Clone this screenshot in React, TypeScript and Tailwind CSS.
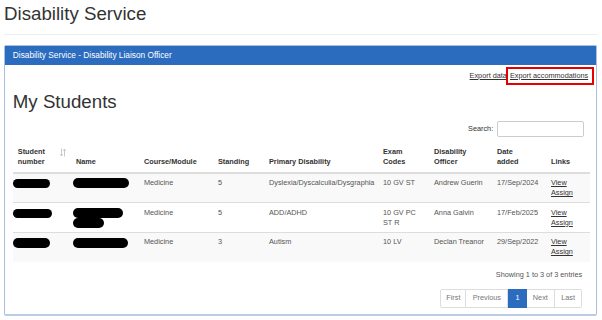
import React from "react";

type Row = {
  sn: number;
  name: [number, number][];
  course: string;
  standing: string;
  disability: string;
  exam: string;
  officer: string;
  date: string;
};

const rows: Row[] = [
  {
    sn: 37,
    name: [[56, 10]],
    course: "Medicine",
    standing: "5",
    disability: "Dyslexia/Dyscalculia/Dysgraphia",
    exam: "10 GV ST",
    officer: "Andrew Guerin",
    date: "17/Sep/2024",
  },
  {
    sn: 39,
    name: [
      [50, 9.5],
      [31, 9.5],
    ],
    course: "Medicine",
    standing: "5",
    disability: "ADD/ADHD",
    exam: "10 GV PC ST R",
    officer: "Anna Galvin",
    date: "17/Feb/2025",
  },
  {
    sn: 37,
    name: [[55, 10]],
    course: "Medicine",
    standing: "3",
    disability: "Autism",
    exam: "10 LV",
    officer: "Declan Treanor",
    date: "29/Sep/2022",
  },
];

function SortIcon() {
  return (
    <svg width="6" height="9" viewBox="0 0 6 9" className="absolute right-[6px] top-[5px]">
      <path d="M1.5 0.5v7.5M0.3 6.3l1.2 1.7 1.2-1.7" stroke="#bdbdbd" strokeWidth="0.8" fill="none" />
      <path d="M4.5 8.5V1M3.3 2.7l1.2-1.7 1.2 1.7" stroke="#bdbdbd" strokeWidth="0.8" fill="none" />
    </svg>
  );
}

const th = "px-[4.2px] py-[4.2px] text-left align-bottom font-bold text-[#333] border-b-2 border-[#ddd]";
const td = "px-[4.2px] py-[4.1px] leading-[10.2px] align-top border-t border-[#ddd]";

export default function App() {
  return (
    <div className="w-[602px] h-[320px] overflow-hidden bg-white font-['Liberation_Sans',Arial,sans-serif] text-[7.3px] leading-[10.4px] text-[#555]">
      <div className="pl-[4px] pr-[5px]">
        <div className="pt-[2.5px] pb-[10px] border-b border-[#eee] mb-[10px]">
          <h1 className="text-[18.7px] leading-[21px] text-[#333]">Disability Service</h1>
        </div>

        <div className="border border-[#a9bfdf] border-b-2 border-b-[#b9cbe5] rounded-[2px]">
          <div className="bg-[#2b6cbf] text-white text-[8.3px] leading-[9.2px] px-[7.8px] py-[5.2px]">
            Disability Service - Disability Liaison Officer
          </div>

          <div className="px-[7.8px] pt-[5.5px] pb-[6px]">
            <div className="flex justify-end gap-[3px] text-[#333]">
              <a className="underline">Export data</a>
              <span className="relative">
                <a className="underline">Export accommodations</a>
                <span className="absolute left-[-4px] right-[-6px] top-[-4px] bottom-[-4px] border-[2.5px] border-[#e60000]" />
              </span>
            </div>

            <h1 className="mt-[10.4px] text-[18.7px] leading-[21px] text-[#333]">My Students</h1>

            <div className="mt-[8.7px] flex items-center justify-end gap-[4px] pr-[4px] text-[#333]">
              <span>Search:</span>
              <div className="w-[87px] h-[16px] border border-[#ccc] rounded-[2px] bg-white" />
            </div>

            <table className="mt-[5.6px] w-[577px] table-fixed border-collapse">
              <colgroup>
                <col className="w-[59px]" />
                <col className="w-[68px]" />
                <col className="w-[74px]" />
                <col className="w-[51px]" />
                <col className="w-[114px]" />
                <col className="w-[51px]" />
                <col className="w-[63px]" />
                <col className="w-[54px]" />
                <col className="w-[43px]" />
              </colgroup>
              <thead>
                <tr>
                  <th className={th + " relative pl-[5px]"}>
                    Student
                    <br />
                    number
                    <SortIcon />
                  </th>
                  <th className={th}>Name</th>
                  <th className={th}>Course/Module</th>
                  <th className={th}>Standing</th>
                  <th className={th}>Primary Disability</th>
                  <th className={th}>
                    Exam
                    <br />
                    Codes
                  </th>
                  <th className={th}>
                    Disability
                    <br />
                    Officer
                  </th>
                  <th className={th}>
                    Date
                    <br />
                    added
                  </th>
                  <th className={th}>Links</th>
                </tr>
              </thead>
              <tbody>
                {rows.map((r, i) => (
                  <tr key={i} className={i % 2 === 0 ? "bg-[#f9f9f9]" : "bg-white"}>
                    <td className={td + " pl-0"}>
                      <div className="mt-[1px] h-[9.5px] rounded-full bg-black" style={{ width: r.sn }} />
                    </td>
                    <td className={td + " pl-[1.5px]"}>
                      {r.name.map(([w, h], j) => (
                        <div
                          key={j}
                          className="rounded-full bg-black mt-[0.5px]"
                          style={{ width: w, height: h }}
                        />
                      ))}
                    </td>
                    <td className={td}>{r.course}</td>
                    <td className={td}>{r.standing}</td>
                    <td className={td + " whitespace-nowrap"}>{r.disability}</td>
                    <td className={td}>{r.exam}</td>
                    <td className={td}>{r.officer}</td>
                    <td className={td}>{r.date}</td>
                    <td className={td + " text-[#333]"}>
                      <a className="block underline">View</a>
                      <a className="block underline">Assign</a>
                    </td>
                  </tr>
                ))}
              </tbody>
            </table>

            <div className="pt-[8.5px] pr-[6px] text-right">Showing 1 to 3 of 3 entries</div>

            <div className="mt-[8.5px] flex justify-end pr-[6px]">
              <div className="flex text-[#777]">
                <span className="px-[5px] py-[3.1px] border border-[#ddd] rounded-l-[2px]">First</span>
                <span className="px-[6.2px] py-[3.1px] border border-l-0 border-[#ddd]">Previous</span>
                <span className="px-[6.2px] py-[3.1px] border border-[#2b6cbf] bg-[#2b6cbf] text-white">1</span>
                <span className="px-[6.2px] py-[3.1px] border border-l-0 border-[#ddd]">Next</span>
                <span className="px-[6.2px] py-[3.1px] border border-l-0 border-[#ddd] rounded-r-[2px]">Last</span>
              </div>
            </div>
          </div>
        </div>
      </div>
    </div>
  );
}
